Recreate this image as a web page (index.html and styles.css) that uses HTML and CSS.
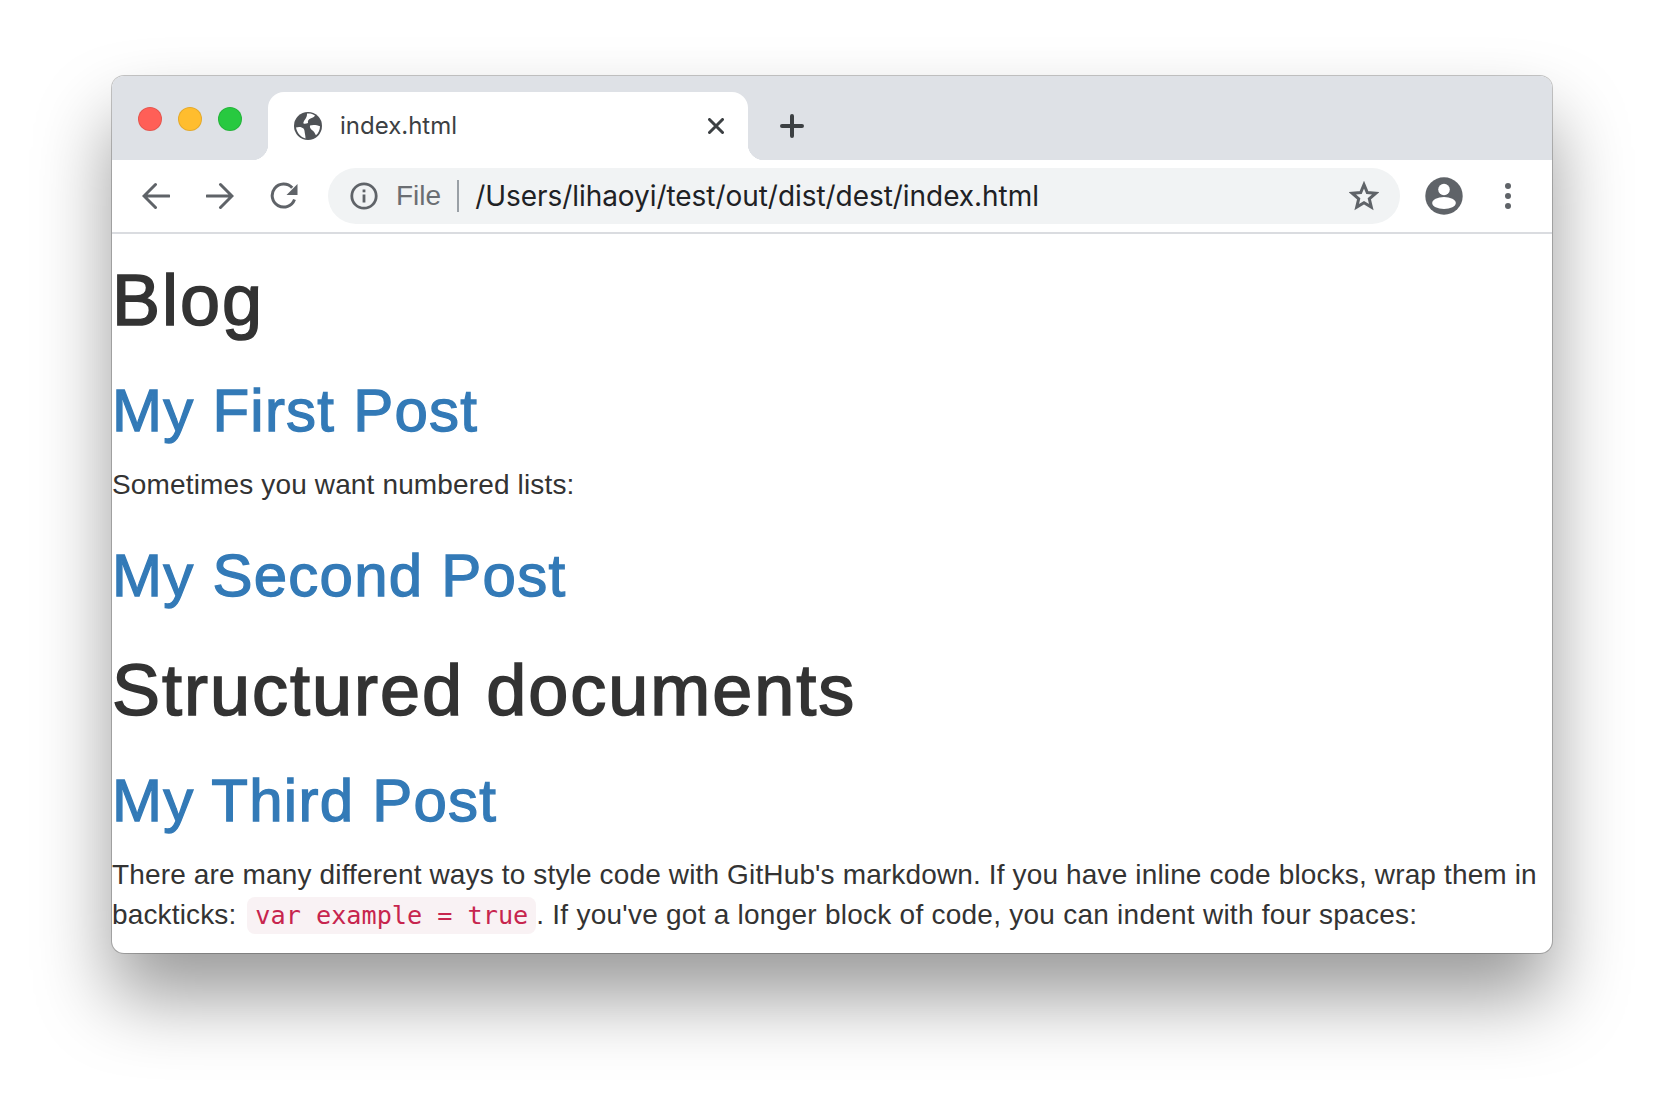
FILE: index.html
```html
<!DOCTYPE html>
<html lang="en">
<head>
<meta charset="utf-8">
<title>index.html</title>
<link rel="stylesheet" href="styles.css">
</head>
<body>
<div class="window">
  <div class="tabstrip">
    <div class="lights">
      <span class="light red"></span>
      <span class="light yellow"></span>
      <span class="light green"></span>
    </div>
    <div class="tab">
      <svg class="globe" viewBox="0 0 28 28"><circle cx="14" cy="14" r="14" fill="#4f5256"/><path fill="#fff" d="M13 1.500c3-.3 6 .3 8 2-1 2-3 2.500-4.500 3-2 .7-3 2.500-2.500 4.500-1.500.5-3 1-4.500.5-.5-1 .5-2.500 1.500-4 1.200-1.800 2.200-3.500 2-6zM2 15.500c3-1 6-.5 7.500 1 1.300 1.300 1 3.500 1.500 5.500.3 1.500.5 3 .5 4.500C6.500 25 3 21 2 15.500zM16 13.500c3-1 7-.5 10 .8 0 3.500-1.500 7-4 9-1-1.500-1.500-3-2.800-4.300-1.500-1.500-3.700-2.500-3.200-5.500z"/></svg>
      <span class="tab-title">index.html</span>
      <svg class="tab-close" viewBox="0 0 16 16"><path d="M1.500 1.500l13 13M14.500 1.500l-13 13" stroke="#3c4043" stroke-width="3" stroke-linecap="round" fill="none"/></svg>
    </div>
    <svg class="new-tab" viewBox="0 0 24 24"><path d="M12 2v20M2 12h20" stroke="#3c4043" stroke-width="4" stroke-linecap="round" fill="none"/></svg>
  </div>
  <div class="toolbar">
    <svg class="nav-icon" viewBox="0 0 28 28"><path d="M27 14H2.500M13.500 2.500L2 14l11.500 11.500" stroke="#5f6368" stroke-width="3" stroke-linecap="round" fill="none"/></svg>
    <svg class="nav-icon" viewBox="0 0 28 28"><path d="M1 14h24.500M14.500 2.500L26 14 14.500 25.500" stroke="#5f6368" stroke-width="3" stroke-linecap="round" fill="none"/></svg>
    <svg class="nav-icon" viewBox="0 0 28 28"><path d="M24.500 17.500A11.500 11.500 0 1 1 22.200 5.800" stroke="#5f6368" stroke-width="3" fill="none"/><path d="M27.500 2v11h-11z" fill="#5f6368"/></svg>
    <div class="omnibox">
      <svg class="info" viewBox="0 0 28 28"><circle cx="14" cy="14" r="12.200" stroke="#5f6368" stroke-width="2.800" fill="none"/><rect x="12.600" y="12.500" width="2.800" height="8" fill="#5f6368"/><rect x="12.600" y="7.500" width="2.800" height="2.800" fill="#5f6368"/></svg>
      <span class="scheme">File</span>
      <span class="divider"></span>
      <span class="url">/Users/lihaoyi/test/out/dist/dest/index.html</span>
      <svg class="star" viewBox="0 0 30 30"><path d="M15 3.600l3.300 7.900 8.500.7-6.500 5.600 2 8.300-7.300-4.400-7.300 4.400 2-8.300-6.500-5.600 8.500-.7z" stroke="#5f6368" stroke-width="3" fill="none"/></svg>
    </div>
    <svg class="avatar" viewBox="0 0 38 38"><circle cx="19" cy="19" r="18.700" fill="#5f6368"/><circle cx="19" cy="12.500" r="5.800" fill="#fff"/><ellipse cx="19" cy="26" rx="11.800" ry="6" fill="#fff"/></svg>
    <div class="menu"><span></span><span></span><span></span></div>
  </div>
  <main class="page">
    <h1>Blog</h1>
    <h2><a href="#first">My First Post</a></h2>
    <p>Sometimes you want numbered lists:</p>
    <h2><a href="#second">My Second Post</a></h2>
    <h1>Structured documents</h1>
    <h2><a href="#third">My Third Post</a></h2>
    <p>There are many different ways to style code with GitHub's markdown. If you have inline code blocks, wrap them in backticks: <code>var example = true</code><span class="tail">. If you've got a longer block of code, you can indent with four spaces:</span></p>
  </main>
</div>
</body>
</html>
```

FILE: styles.css
```css
* { box-sizing: border-box; }
html, body { margin: 0; height: 100%; background: #fff; }
body { padding: 76px 112px 148px; overflow: hidden; }
.window {
  height: 877px;
  display: flex;
  flex-direction: column;
  border-radius: 12px;
  background: #fff;
  box-shadow: 0 0 0 1px rgba(0,0,0,.22), 0 44px 76px rgba(0,0,0,.4);
}
.tabstrip {
  height: 84px;
  flex: none;
  display: flex;
  align-items: flex-end;
  background: #dee1e6;
  border-radius: 12px 12px 0 0;
}
.lights { width: 156px; height: 84px; flex: none; display: flex; gap: 16px; padding: 31px 0 0 26px; }
.light { width: 24px; height: 24px; border-radius: 50%; border: 1px solid rgba(0,0,0,.1); }
.red { background: #ff5f57; }
.yellow { background: #ffbd2e; }
.green { background: #28c940; }
.tab {
  width: 480px;
  height: 68px;
  flex: none;
  display: flex;
  align-items: center;
  padding: 0 0 0 26px;
  background: #fff;
  border-radius: 16px 16px 0 0;
  position: relative;
}
.tab::before, .tab::after {
  content: "";
  position: absolute;
  bottom: 0;
  width: 16px;
  height: 16px;
}
.tab::before { left: -16px; background: radial-gradient(circle at 0 0, #dee1e6 16px, #fff 16.500px); }
.tab::after { right: -16px; background: radial-gradient(circle at 100% 0, #dee1e6 16px, #fff 16.500px); }
.globe { width: 28px; height: 28px; flex: none; }
.tab-title { margin-left: 18px; font: 24px/1 Inter, sans-serif; color: #3c4043; flex: 1; }
.tab-close { width: 16px; height: 16px; flex: none; margin-right: 24px; }
.new-tab { width: 24px; height: 24px; flex: none; margin: 0 0 22px 32px; }
.toolbar {
  height: 74px;
  flex: none;
  display: flex;
  align-items: center;
  padding-left: 30px;
  background: #fff;
  border-bottom: 2px solid #dadce0;
}
.nav-icon { width: 28px; height: 28px; flex: none; margin-right: 36px; }
.nav-icon:nth-of-type(3) { margin-right: 30px; }
.omnibox {
  width: 1072px;
  height: 56px;
  flex: none;
  display: flex;
  align-items: center;
  padding: 0 21px 0 22px;
  background: #f1f3f4;
  border-radius: 28px;
}
.info { width: 28px; height: 28px; flex: none; }
.scheme { margin-left: 18px; font: 28px/1 "Liberation Sans", sans-serif; color: #6b6e72; }
.divider { width: 2px; height: 32px; margin: 0 16px; background: #9aa0a6; }
.url { flex: 1; font: 28px/1 Inter, sans-serif; letter-spacing: -.05px; color: #202124; }
.star { width: 30px; height: 30px; flex: none; }
.avatar { width: 38px; height: 38px; flex: none; margin-left: 25px; }
.menu { display: flex; flex-direction: column; gap: 4px; margin-left: 42px; }
.menu span { width: 6px; height: 6px; border-radius: 50%; background: #5f6368; }
.page {
  flex: 1;
  min-height: 0;
  overflow: hidden;
  font: 28px/40px "Liberation Sans", sans-serif;
  color: #333;
}
h1, h2 { font-weight: 400; line-height: 1.1; }
h1 { font-size: 72px; letter-spacing: 2px; margin: 42px 0 20px; -webkit-text-stroke: 1.6px currentColor; }
h2 { font-size: 60px; letter-spacing: 1.25px; margin: 38px 0 21px; -webkit-text-stroke: 1.3px currentColor; }
h1:first-child { margin-top: 27px; }
a { color: #337ab7; text-decoration: none; }
p { margin: 0 0 20px; letter-spacing: .145px; }
code {
  font-family: "DejaVu Sans Mono", monospace;
  font-size: 25.200px;
  letter-spacing: 0;
  margin-left: 3px;
  padding: 4px 8px;
  color: #c7254e;
  background: #f9f2f4;
  border-radius: 8px;
}
.tail { letter-spacing: .25px; }
```
